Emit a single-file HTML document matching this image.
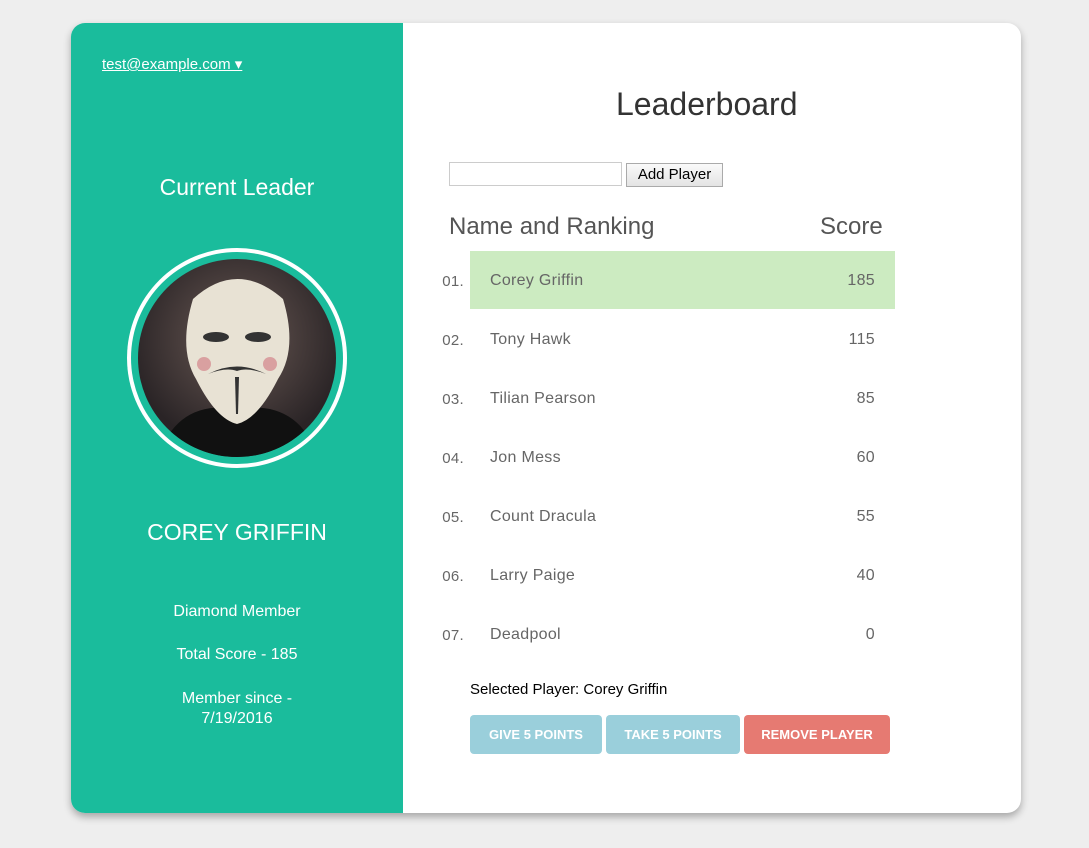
<!DOCTYPE html>
<html><head><style>
body{margin:0;background:#eeeeee;width:1089px;height:848px;font-family:"Liberation Sans",sans-serif;position:relative;overflow:hidden}
.card{position:absolute;left:71px;top:23px;width:950px;height:790px;background:#fff;border-radius:14px;box-shadow:0 4px 8px rgba(0,0,0,.3);overflow:hidden}
.left{position:absolute;left:0;top:0;width:332px;height:790px;background:#1abc9c;color:#fff;text-align:center}
.abs{position:absolute}
.row{position:absolute;left:0;width:1089px;height:58px;font-size:16px;color:#666;letter-spacing:.3px}
.row .n{position:absolute;right:625px;top:22px;font-size:15px}
.row .nm{position:absolute;left:490px;top:21px}
.row .sc{position:absolute;right:214px;top:21px}
.btn{position:absolute;top:715px;height:39px;border-radius:4px;color:#fff;font-weight:bold;font-size:13px;line-height:39px;text-align:center}
</style></head><body>
<div class="card">
<div class="left">
 <div class="abs" style="left:31px;top:32px;font-size:15px;text-decoration:underline">test@example.com ▾</div>
 <div class="abs" style="left:0;width:332px;top:151px;font-size:23px;font-weight:300">Current Leader</div>
 <div class="abs" style="left:56px;top:225px;width:220px;height:220px;border-radius:50%;background:#fff"></div>
 <div class="abs" style="left:60px;top:229px;width:212px;height:212px;border-radius:50%;background:#1abc9c"></div>
 <div class="abs" style="left:67px;top:236px;width:198px;height:198px;border-radius:50%;overflow:hidden;background:radial-gradient(circle at 50% 40%,#6b5a55,#2a2426 70%)">
  <svg width="198" height="198" viewBox="0 0 198 198">
   <path d="M20 198 Q40 140 99 150 Q160 140 180 198Z" fill="#111"/>
   <path d="M55 40 Q99 0 145 40 Q160 90 140 120 Q120 160 99 165 Q78 160 58 120 Q40 90 55 40Z" fill="#e8e2d4"/>
   <ellipse cx="78" cy="78" rx="13" ry="5" fill="#333"/><ellipse cx="120" cy="78" rx="13" ry="5" fill="#333"/>
   <path d="M70 115 Q99 100 128 115 Q110 108 99 112 Q88 108 70 115Z" fill="#333"/>
   <path d="M97 118 L101 118 L100 155 L98 155Z" fill="#333"/>
   <circle cx="66" cy="105" r="7" fill="#d9a0a0"/><circle cx="132" cy="105" r="7" fill="#d9a0a0"/>
  </svg>
 </div>
 <div class="abs" style="left:0;width:332px;top:496px;font-size:23px">COREY GRIFFIN</div>
 <div class="abs" style="left:0;width:332px;top:580px;font-size:16px">Diamond Member</div>
 <div class="abs" style="left:0;width:332px;top:623px;font-size:16px">Total Score - 185</div>
 <div class="abs" style="left:0;width:332px;top:666px;font-size:16px;line-height:20px">Member since -<br>7/19/2016</div>
</div>
</div>
<div class="abs" style="left:616px;top:86px;font-size:32px;color:#333">Leaderboard</div>
<div class="abs" style="left:449px;top:162px;width:171px;height:22px;border:1px solid #ccc;background:#fff"></div>
<div class="abs" style="left:626px;top:163px;width:95px;height:22px;border:1px solid #aaa;background:linear-gradient(#fafafa,#e4e4e4);font-size:15px;line-height:22px;text-align:center;color:#000">Add Player</div>
<div class="abs" style="left:449px;top:213px;font-size:24px;color:#555;font-weight:300">Name and Ranking</div>
<div class="abs" style="left:820px;top:213px;font-size:24px;color:#555;font-weight:300">Score</div>
<div class="abs" style="left:470px;top:251px;width:425px;height:58px;background:#ccebc1"></div>
<div class="row" style="top:251px"><span class="n">01.</span><span class="nm">Corey Griffin</span><span class="sc">185</span></div>
<div class="row" style="top:310px"><span class="n">02.</span><span class="nm">Tony Hawk</span><span class="sc">115</span></div>
<div class="row" style="top:369px"><span class="n">03.</span><span class="nm">Tilian Pearson</span><span class="sc">85</span></div>
<div class="row" style="top:428px"><span class="n">04.</span><span class="nm">Jon Mess</span><span class="sc">60</span></div>
<div class="row" style="top:487px"><span class="n">05.</span><span class="nm">Count Dracula</span><span class="sc">55</span></div>
<div class="row" style="top:546px"><span class="n">06.</span><span class="nm">Larry Paige</span><span class="sc">40</span></div>
<div class="row" style="top:605px"><span class="n">07.</span><span class="nm">Deadpool</span><span class="sc">0</span></div>
<div class="abs" style="left:470px;top:681px;font-size:15px;color:#000">Selected Player: Corey Griffin</div>
<div class="btn" style="left:470px;width:132px;background:#9acfdb">GIVE 5 POINTS</div>
<div class="btn" style="left:606px;width:134px;background:#9acfdb">TAKE 5 POINTS</div>
<div class="btn" style="left:744px;width:146px;background:#e67a72">REMOVE PLAYER</div>
</body></html>
